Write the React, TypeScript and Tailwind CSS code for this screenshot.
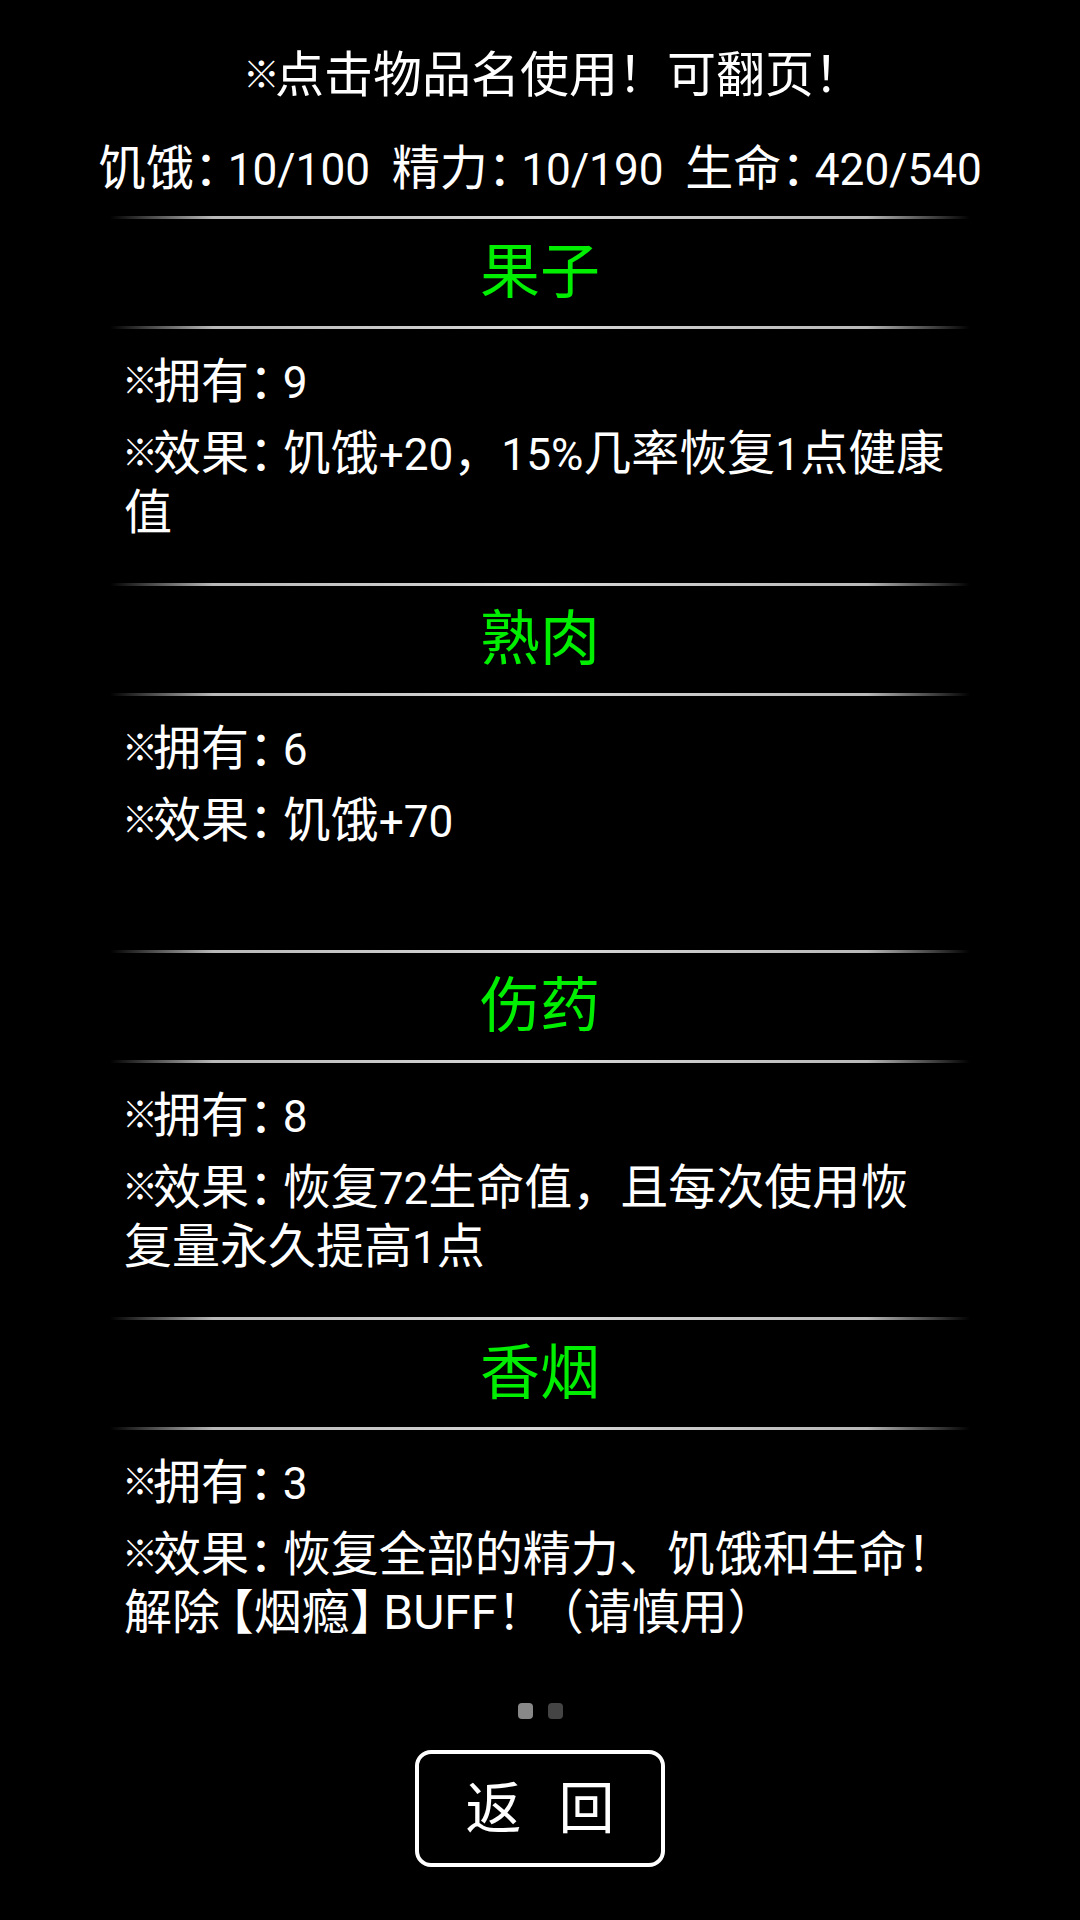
import React from "react";

const FONT = { fontFamily: 'Roboto, "Noto Sans CJK SC", sans-serif' };

function rich(s: string): React.ReactNode[] {
  const out: React.ReactNode[] = [];
  let buf = "";
  let num = "";
  let k = 0;
  const flushBuf = () => {
    if (buf) {
      out.push(<span key={k++}>{buf}</span>);
      buf = "";
    }
  };
  const flushNum = () => {
    if (num) {
      out.push(
        <span key={k++} className="text-[0.92em]">
          {num}
        </span>
      );
      num = "";
    }
  };
  const pullLast = (cls: string) => {
    // tighten the character before an opening bracket
    if (buf) {
      const chars = Array.from(buf);
      const last = chars.pop() as string;
      const rest = chars.join("");
      if (rest) out.push(<span key={k++}>{rest}</span>);
      out.push(
        <span key={k++} className={cls}>
          {last}
        </span>
      );
      buf = "";
    }
  };
  for (const ch of s) {
    if (/[0-9/+%]/.test(ch)) {
      flushBuf();
      num += ch;
      continue;
    }
    flushNum();
    if (ch === "※") {
      flushBuf();
      out.push(
        <span key={k++} className="ml-[-2px] text-[0.75em] tracking-[-5px] align-[4px]">
          ※
        </span>
      );
    } else if (ch === "：") {
      flushBuf();
      out.push(
        <span key={k++} className="tracking-[-0.3em]">
          ：
        </span>
      );
    } else if (ch === "【") {
      pullLast("tracking-[-0.3em]");
      out.push(<span key={k++}>【</span>);
    } else if (ch === "】") {
      flushBuf();
      out.push(
        <span key={k++} className="tracking-[-0.3em]">
          】
        </span>
      );
    } else if (ch === "（") {
      pullLast("tracking-[-0.2em]");
      out.push(<span key={k++}>（</span>);
    } else if (ch === "）") {
      flushBuf();
      out.push(
        <span key={k++} className="tracking-[-0.2em]">
          ）
        </span>
      );
    } else if (ch === "_") {
      flushBuf();
      out.push(<span key={k++} className="inline-block w-[0.45em]" />);
    } else {
      buf += ch;
    }
  }
  flushNum();
  flushBuf();
  return out;
}

function Sep() {
  return (
    <div className="mx-auto h-[3px] w-[860px] bg-[linear-gradient(to_right,transparent_0%,#b8b8b8_12%,#d8d8d8_50%,#b8b8b8_88%,transparent_100%)]" />
  );
}

type Item = { name: string; count: number; effect: string[] };

const items: Item[] = [
  { name: "果子", count: 9, effect: ["※效果：饥饿+20，15%几率恢复1点健康", "值"] },
  { name: "熟肉", count: 6, effect: ["※效果：饥饿+70"] },
  { name: "伤药", count: 8, effect: ["※效果：恢复72生命值，且每次使用恢", "复量永久提高1点"] },
  { name: "香烟", count: 3, effect: ["※效果：恢复全部的精力、饥饿和生命！", "解除【烟瘾】BUFF！（请慎用）"] },
];

function ItemBlock({ item }: { item: Item }) {
  return (
    <div className="flex flex-col">
      <Sep />
      <div className="flex h-[107px] items-center justify-center text-[60px] leading-none text-[#00ee00]">
        {item.name}
      </div>
      <Sep />
      <div className="h-[254px] pl-[124px] pt-[24px] text-[48px] leading-[58px] text-white">
        <div className="whitespace-nowrap">{rich(`※拥有：${item.count}`)}</div>
        <div className="mt-[13px] whitespace-nowrap">
          {item.effect.map((l, i) => (
            <div key={i}>{rich(l)}</div>
          ))}
        </div>
      </div>
    </div>
  );
}

export default function App() {
  return (
    <div className="flex h-[1920px] w-[1080px] flex-col bg-black text-white" style={FONT}>
      <div className="pl-[28px] pt-[46px] text-center text-[49px] leading-[60px] whitespace-nowrap">
        {rich("※点击物品名使用！可翻页！")}
      </div>
      <div className="mt-[33px] text-center text-[48px] leading-[60px] whitespace-nowrap">
        {rich("饥饿：10/100_精力：10/190_生命：420/540")}
      </div>
      <div className="mt-[16px] flex flex-col">
        {items.map((it) => (
          <ItemBlock key={it.name} item={it} />
        ))}
      </div>
      <div className="mt-[19px] flex justify-center gap-[15px]">
        <div className="h-[16px] w-[15px] rounded-[4px] bg-[#888888]" />
        <div className="h-[16px] w-[15px] rounded-[4px] bg-[#444444]" />
      </div>
      <div className="mt-[31px] flex justify-center">
        <button className="flex h-[117px] w-[250px] items-center justify-center gap-[37px] rounded-[16px] border-[4px] border-white bg-black text-[56px] leading-none text-white">
          <span>返</span>
          <span>回</span>
        </button>
      </div>
    </div>
  );
}
